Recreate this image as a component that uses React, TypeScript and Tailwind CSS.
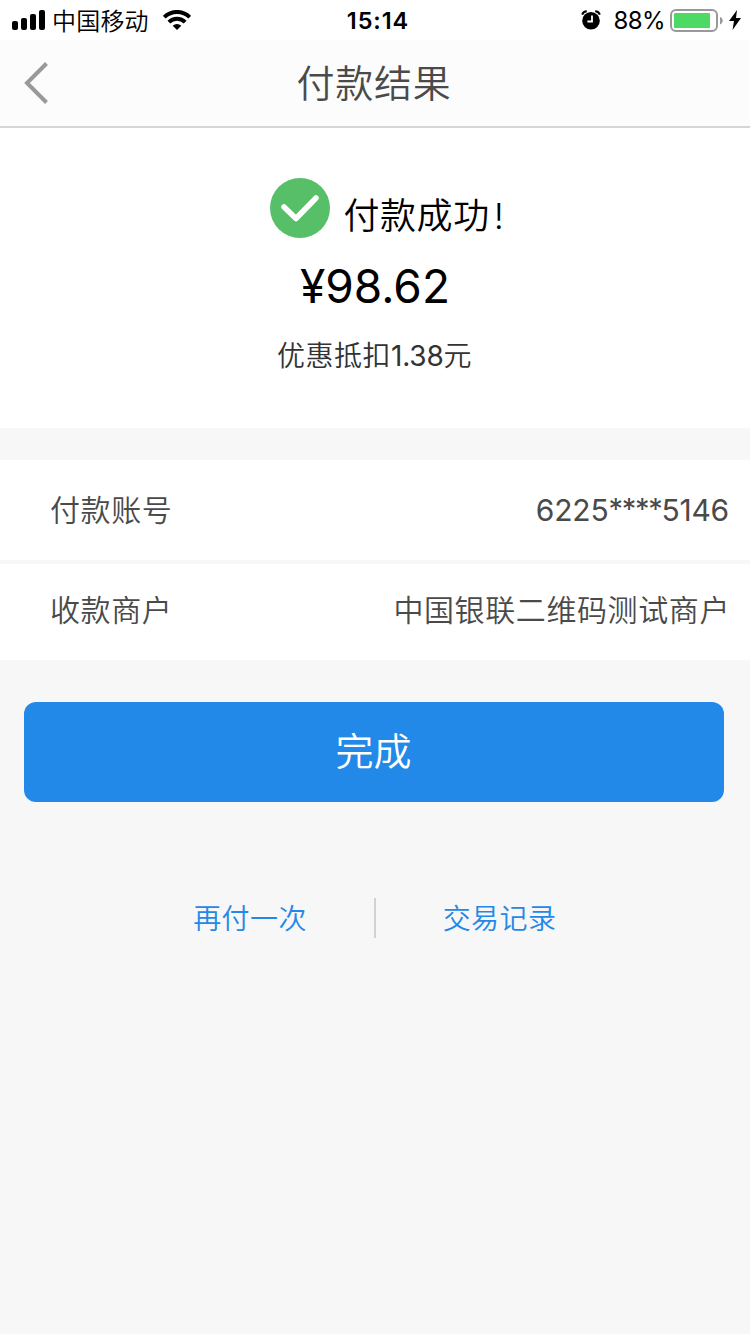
interface DetailRowProps {
  label: string;
  value: string;
}

const details = [
  { label: '付款账号', value: '6225****5146' },
  { label: '收款商户', value: '中国银联二维码测试商户' },
];

function SignalIcon() {
  return (
    <svg className="w-[34px] h-5 shrink-0" viewBox="0 0 34 20">
      <rect x="0" y="11" width="6" height="9" rx="2" />
      <rect x="9" y="8" width="6" height="12" rx="2" />
      <rect x="18" y="4" width="6" height="16" rx="2" />
      <rect x="27" y="0" width="6" height="20" rx="2" />
    </svg>
  );
}

function WifiIcon() {
  return (
    <svg className="w-7 h-5 shrink-0" viewBox="0 0 28 20" fill="none" stroke="#000" strokeWidth="4">
      <path d="M1.3 7.2a18 18 0 0 1 25.4 0" />
      <path d="M5.9 12.2a11.4 11.4 0 0 1 16.2 0" />
      <path d="M14 20l-4.3-4.2a6 6 0 0 1 8.6 0z" fill="#000" stroke="none" />
    </svg>
  );
}

function AlarmIcon() {
  return (
    <svg className="w-5 h-5 shrink-0" viewBox="0 0 20 20">
      <circle cx="10" cy="10.8" r="8.8" />
      <path d="M1.2 4.6a5 5 0 0 1 4.6-3.4M18.8 4.6a5 5 0 0 0-4.6-3.4" fill="none" stroke="#000" strokeWidth="2" />
      <path d="M11 5.5v6H6.4" fill="none" stroke="#fff" strokeWidth="1.8" />
    </svg>
  );
}

function BatteryIcon() {
  return (
    <svg className="w-[54px] h-6 shrink-0" viewBox="0 0 54 24">
      <rect x="1" y="2" width="46" height="21" rx="5" fill="none" stroke="#999" strokeWidth="2" />
      <rect x="4" y="5" width="36" height="15" rx="1" fill="#4cd964" />
      <path d="M50 9c3.6 1 3.6 6.4 0 7.4z" fill="#999" />
    </svg>
  );
}

function StatusBar() {
  return (
    <div className="grid grid-cols-3 items-center h-10 bg-white text-black">
      <div className="flex items-center pl-3">
        <SignalIcon />
        <span className="ml-[6px] pt-[3px] text-[24px] leading-[37px] tracking-[0.2px] font-[350]">中国移动</span>
        <div className="ml-[14px]">
          <WifiIcon />
        </div>
      </div>
      <div className="pl-[6px] pt-[2px] text-center text-[23.5px] leading-[38px] font-semibold tracking-[0.9px]">15:14</div>
      <div className="flex items-center justify-end pr-[9px]">
        <AlarmIcon />
        <span className="ml-[13px] pt-[2px] text-[24px] leading-[38px] tracking-[-0.6px]">88%</span>
        <div className="ml-[5px]">
          <BatteryIcon />
        </div>
        <svg className="w-3 h-5 ml-[5px]" viewBox="0 0 12 20">
          <path d="M8 0L0 11h5L3.5 20 12 8H7z" />
        </svg>
      </div>
    </div>
  );
}

function NavBar() {
  return (
    <header className="grid grid-cols-[75px_1fr_75px] items-center h-[88px] bg-[#fcfcfc] border-b-2 border-[#d5d5da]">
      <button className="pl-6">
        <svg className="w-6 h-[42px]" viewBox="0 0 24 42" fill="none" stroke="#999" strokeWidth="4">
          <path d="M22.5 1.5L3 21l19.5 19.5" />
        </svg>
      </button>
      <h1 className="pr-[2px] pt-px text-center text-[38px] leading-[85px] tracking-[0.8px] font-[350] text-[#4a4a4a]">付款结果</h1>
    </header>
  );
}

function DetailRow({ label, value }: DetailRowProps) {
  const isCard = value.includes('*');
  const parts = value.split(/(\*+)/);

  return (
    <div className="flex justify-between pl-[50px] pr-5 text-[30px] tracking-[0.6px] font-[350] text-[#4a4a4a]">
      <span>{label}</span>
      {isCard ? (
        <span className="flex pr-px font-normal tracking-[-0.2px]">
          {parts.map((part, i) => (
            <span key={i} className={part.startsWith('*') ? '-mt-px text-[29px] tracking-[-1.3px]' : ''}>
              {part}
            </span>
          ))}
        </span>
      ) : (
        <span>{value}</span>
      )}
    </div>
  );
}

export default function App() {
  return (
    <div className="w-[750px] h-[1334px] overflow-hidden bg-[#f7f7f7] font-[Inter,'Noto_Sans_CJK_SC',sans-serif]">
      <StatusBar />
      <NavBar />

      {/* Result summary */}
      <section className="flex flex-col items-center h-[300px] pt-[50px] bg-white text-black">
        <div className="flex h-[60px] pl-[25px]">
          <svg className="w-[60px] h-[60px]" viewBox="0 0 60 60" fill="none">
            <circle cx="30" cy="30" r="30" fill="#57bf68" />
            <path d="M14 29l12 11.5L46 20" stroke="#fff" strokeWidth="5.5" strokeLinecap="round" strokeLinejoin="round" />
          </svg>
          <span className="ml-[13px] pt-[8px] text-[36px] leading-[60px] tracking-[0.6px] font-[350]">
            付款成功<span className="ml-1">!</span>
          </span>
        </div>
        <div className="mt-[18px] text-[46px] leading-[60px]">¥98.62</div>
        <div className="mt-[20px] pr-px text-[28px] leading-[40px] tracking-[0.5px] font-[350] text-[#333]">
          优惠抵扣<span className="font-normal tracking-[-0.2px]">1.38</span>元
        </div>
      </section>

      {/* Payment details */}
      <section className="mt-8 bg-white">
        {details.map((item, index) => (
          <div
            key={item.label}
            className={index > 0 ? 'h-[100px] border-t-4 border-[#f7f7f7] leading-[92px]' : 'h-[100px] leading-[100px]'}
          >
            <DetailRow label={item.label} value={item.value} />
          </div>
        ))}
      </section>

      <button className="block w-[700px] h-[100px] mt-[42px] ml-6 pr-px pb-[2px] rounded-xl bg-[#2389e9] text-[38px] font-[350] text-white">
        完成
      </button>

      <div className="flex items-center justify-center h-10 mt-24 text-[28px] leading-10 tracking-[0.4px] font-[350] text-[#2389e9]">
        <a className="w-[249px] pt-[2px] pl-px text-center">再付一次</a>
        <div className="w-[2px] h-10 bg-[#d2d2d2]" />
        <a className="w-[249px] pt-[2px] pr-[2px] text-center">交易记录</a>
      </div>
    </div>
  );
}
